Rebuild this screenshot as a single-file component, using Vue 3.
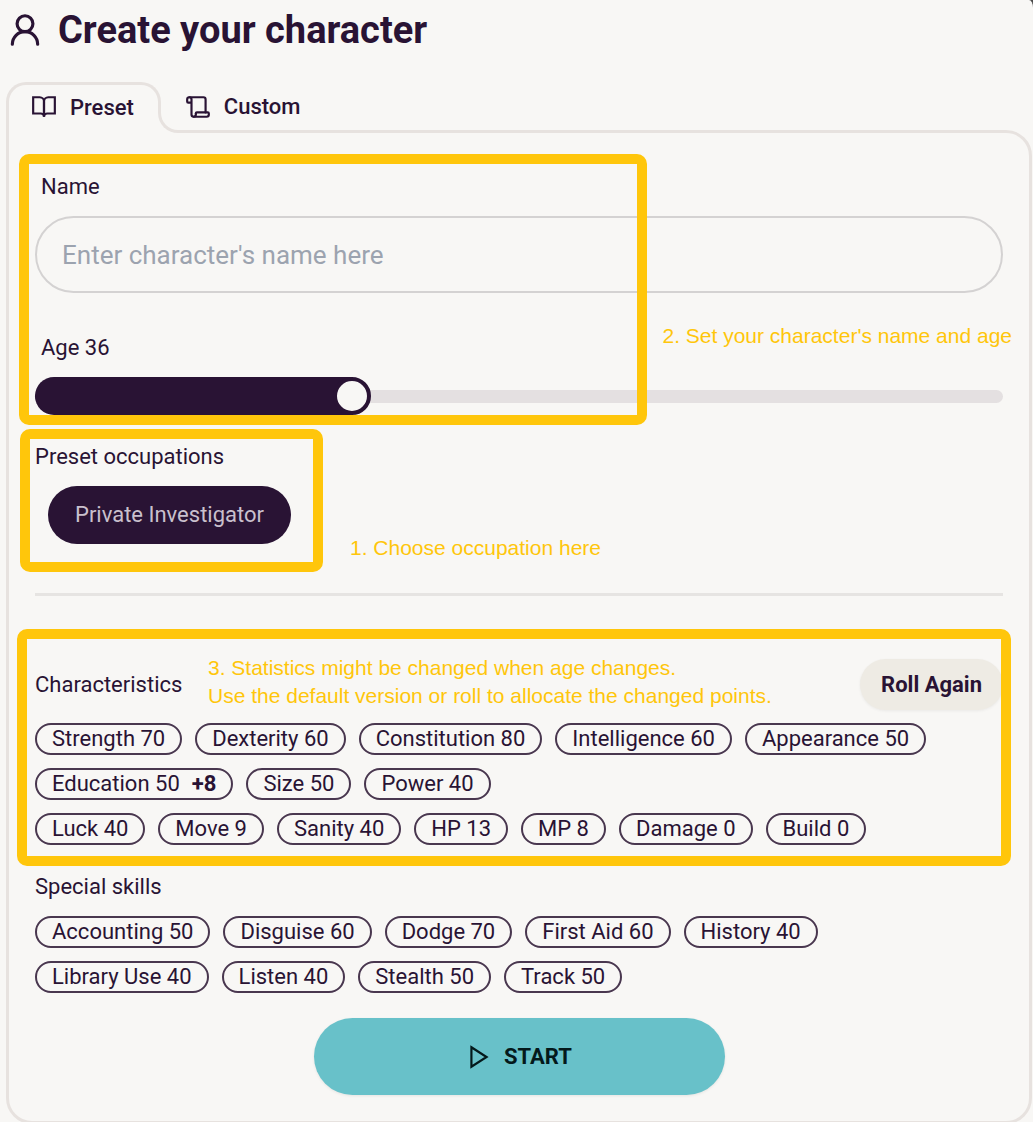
<script setup>
import { computed, ref } from 'vue'

const name = ref('')
const age = ref(36)
const minAge = 20
const maxAge = 70
const ageRatio = computed(() => (age.value - minAge) / (maxAge - minAge))

const characteristics = [
  { label: 'Strength', value: 70 },
  { label: 'Dexterity', value: 60 },
  { label: 'Constitution', value: 80 },
  { label: 'Intelligence', value: 60 },
  { label: 'Appearance', value: 50 },
  { label: 'Education', value: 50, bonus: '+8' },
  { label: 'Size', value: 50 },
  { label: 'Power', value: 40 },
]
const attributes = [
  { label: 'Luck', value: 40 },
  { label: 'Move', value: 9 },
  { label: 'Sanity', value: 40 },
  { label: 'HP', value: 13 },
  { label: 'MP', value: 8 },
  { label: 'Damage', value: 0 },
  { label: 'Build', value: 0 },
]
const skills = [
  { label: 'Accounting', value: 50 },
  { label: 'Disguise', value: 60 },
  { label: 'Dodge', value: 70 },
  { label: 'First Aid', value: 60 },
  { label: 'History', value: 40 },
  { label: 'Library Use', value: 40 },
  { label: 'Listen', value: 40 },
  { label: 'Stealth', value: 50 },
  { label: 'Track', value: 50 },
]
</script>

<template>
  <main class="page">
    <h1 class="title">
      <svg class="title-icon" viewBox="0 0 24 24" aria-hidden="true">
        <circle cx="12" cy="8" r="5" />
        <path d="M20 21a8 8 0 0 0-16 0" />
      </svg>
      Create your character
    </h1>

    <div class="tabs" role="tablist">
      <button class="tab active" type="button" role="tab" aria-selected="true">
        <svg class="icon" viewBox="0 0 24 24" aria-hidden="true">
          <path d="M2 3h6a4 4 0 0 1 4 4v14a3 3 0 0 0-3-3H2z" />
          <path d="M22 3h-6a4 4 0 0 0-4 4v14a3 3 0 0 1 3-3h7z" />
        </svg>
        Preset
      </button>
      <button class="tab" type="button" role="tab" aria-selected="false">
        <svg class="icon" viewBox="0 0 24 24" aria-hidden="true">
          <path d="M10 18v1a2 2 0 0 1-2 2a2 2 0 0 1-2-2V5a2 2 0 0 0-4 0v2a1 1 0 0 0 1 1h3" />
          <path d="M8 21h12a2 2 0 0 0 2-2v-1a1 1 0 0 0-1-1H11a1 1 0 0 0-1 1" />
          <path d="M19 17V5a2 2 0 0 0-2-2H4" />
        </svg>
        Custom
      </button>
    </div>

    <section class="panel">
      <div class="identity">
        <label class="label inset" for="name">Name</label>
        <input id="name" v-model="name" class="name" type="text" placeholder="Enter character's name here" />
        <label class="label inset" for="age">Age {{ age }}</label>
        <input
          id="age"
          v-model.number="age"
          class="range"
          type="range"
          :min="minAge"
          :max="maxAge"
          :style="{ '--ratio': ageRatio }"
        />
        <div class="frame frame-identity"></div>
        <p class="note note-identity">2. Set your character's name and age</p>
      </div>

      <div class="occupations">
        <h2 class="label">Preset occupations</h2>
        <button class="occupation" type="button">Private Investigator</button>
        <div class="frame frame-occupations"></div>
        <p class="note note-occupations">1. Choose occupation here</p>
      </div>

      <hr class="divider" />

      <div class="stats">
        <div class="stats-head">
          <h2 class="label">Characteristics</h2>
          <button class="roll" type="button">Roll Again</button>
        </div>
        <ul class="chips">
          <li v-for="c in characteristics" :key="c.label" class="chip">
            {{ c.label }} {{ c.value }}<b v-if="c.bonus" class="bonus">{{ c.bonus }}</b>
          </li>
        </ul>
        <ul class="chips">
          <li v-for="c in attributes" :key="c.label" class="chip">{{ c.label }} {{ c.value }}</li>
        </ul>
        <div class="frame frame-stats"></div>
        <p class="note note-stats">
          3. Statistics might be changed when age changes.<br />
          Use the default version or roll to allocate the changed points.
        </p>
      </div>

      <div class="skills">
        <h2 class="label">Special skills</h2>
        <ul class="chips">
          <li v-for="s in skills" :key="s.label" class="chip">{{ s.label }} {{ s.value }}</li>
        </ul>
      </div>

      <button class="start" type="button">
        <svg class="icon" viewBox="0 0 24 24" aria-hidden="true">
          <path d="M5 3l14 9-14 9z" />
        </svg>
        START
      </button>
    </section>
  </main>
</template>

<style>
body {
  margin: 0;
  background: #4a4a4a;
}
</style>

<style scoped>
.page {
  --ink: #291334;
  --paper: #f8f7f5;
  --line: #e7e2df;
  --mark: #ffc60b;
  box-sizing: border-box;
  min-height: 100vh;
  overflow: hidden;
  padding: 8px 1px 0 6px;
  border-top-right-radius: 4px 8px;
  background: var(--paper);
  color: var(--ink);
  font-family: Roboto, "Liberation Sans", sans-serif;
  font-size: 22px;
}

.title {
  display: flex;
  align-items: center;
  gap: 14px;
  margin: 0 0 30px;
  font-size: 38px;
  line-height: 44px;
  font-weight: 700;
}

svg {
  flex: none;
  fill: none;
  stroke: currentColor;
  stroke-width: 2;
  stroke-linecap: round;
}

.title-icon {
  width: 38px;
  height: 38px;
}

.icon {
  width: 26px;
  height: 26px;
}

button,
input {
  font: inherit;
  color: inherit;
}

.tabs {
  display: flex;
  position: relative;
  z-index: 1;
  margin-bottom: -3px;
}

.tab {
  display: flex;
  align-items: center;
  gap: 13px;
  box-sizing: border-box;
  height: 51px;
  padding: 0 24px 2px;
  border: 0;
  background: none;
  font-weight: 500;
}

.tab.active {
  position: relative;
  padding: 0 24px 4px 22px;
  border: 3px solid var(--line);
  border-bottom: 0;
  border-radius: 20px 20px 0 0;
  background: var(--paper);
}

/* The foot of the active tab sweeps into the panel's top edge. */
.tab.active::before,
.tab.active::after {
  content: "";
  position: absolute;
  left: 100%;
  bottom: 0;
  box-sizing: border-box;
  width: 20px;
  height: 20px;
  background: var(--paper);
}

.tab.active::after {
  border: solid var(--line);
  border-width: 0 0 3px 3px;
  border-bottom-left-radius: 20px;
}

.panel {
  display: flex;
  flex-direction: column;
  padding: 40px 26px 26px;
  border: 3px solid var(--line);
  border-radius: 0 26px 26px 26px;
}

.label {
  margin: 0;
  font-size: 22px;
  line-height: 28px;
  font-weight: 400;
}

.inset {
  padding-left: 6px;
}

.identity,
.occupations,
.stats {
  position: relative;
}

.identity {
  display: flex;
  flex-direction: column;
}

.name {
  box-sizing: border-box;
  width: 100%;
  height: 77px;
  margin: 15px 0 41px;
  padding: 0 25px;
  border: 2px solid #d4d2d2;
  border-radius: 39px;
  background: none;
  font-size: 26px;
}

.name::placeholder {
  color: #9ca3af;
  opacity: 1;
}

/* The fill runs from the left end to the centre of the thumb. */
.range {
  --fill: calc(19px + (100% - 38px) * var(--ratio));
  appearance: none;
  width: 100%;
  height: 38px;
  margin: 15px 0 0;
  border-radius: 19px;
  background: linear-gradient(var(--ink), var(--ink)) left / var(--fill) 100% no-repeat;
}

.range::-webkit-slider-runnable-track {
  height: 13px;
  border-radius: 7px;
  background: linear-gradient(90deg, var(--ink) var(--fill), #e4e0e1 0);
}

.range::-webkit-slider-thumb {
  appearance: none;
  box-sizing: border-box;
  width: 38px;
  height: 38px;
  margin-top: -13px;
  border: 4px solid var(--ink);
  border-radius: 50%;
  background: var(--paper);
}

.occupations {
  margin-top: 28px;
}

.occupation {
  display: block;
  height: 58px;
  margin: 15px 0 0 13px;
  padding: 0 27px 2px;
  border: 0;
  border-radius: 29px;
  background: var(--ink);
  color: #c9c0cd;
}

.divider {
  width: 100%;
  height: 3px;
  margin: 49px 0 63px;
  border: 0;
  background: #e6e4e2;
}

.stats-head {
  display: flex;
  align-items: center;
  justify-content: space-between;
  margin-bottom: 13px;
}

.roll {
  height: 51px;
  padding: 0 21px;
  border: 0;
  border-radius: 26px;
  background: #eeebe4;
  box-shadow: 0 1px 3px rgba(0, 0, 0, 0.06);
  font-weight: 700;
}

.chips {
  display: flex;
  flex-wrap: wrap;
  gap: 13px;
  margin: 0 0 13px;
  padding: 0;
  list-style: none;
}

.chip {
  padding: 0 15px;
  border: 2px solid #49374f;
  border-radius: 16px;
  line-height: 28px;
}

.bonus {
  margin-left: 12px;
}

.skills {
  margin-top: 15px;
  padding-right: 26px;
}

.skills .label {
  margin-bottom: 15px;
}

.start {
  display: flex;
  align-items: center;
  justify-content: center;
  gap: 12px;
  align-self: center;
  width: 411px;
  max-width: 100%;
  height: 77px;
  margin-top: 12px;
  border: 0;
  border-radius: 39px;
  background: #68c1c9;
  box-shadow: 0 1px 3px rgba(0, 0, 0, 0.08);
  color: #04191b;
  font-weight: 700;
}

.frame {
  position: absolute;
  border: 10px solid var(--mark);
  border-radius: 10px;
  pointer-events: none;
}

.frame-identity {
  inset: -19px 356px -10px -16px;
}

.frame-occupations {
  inset: -14px 680px -28px -15px;
}

.frame-stats {
  inset: -30px -8px -8px -18px;
}

.note {
  position: absolute;
  margin: 0;
  color: #ffc60b;
  font-family: "Liberation Sans", Arial, sans-serif;
  font-size: 21px;
  line-height: 28px;
  white-space: nowrap;
}

.note-identity {
  right: -9px;
  bottom: 65px;
}

.note-occupations {
  left: 315px;
  top: 91px;
}

.note-stats {
  left: 173px;
  top: -5px;
}
</style>
